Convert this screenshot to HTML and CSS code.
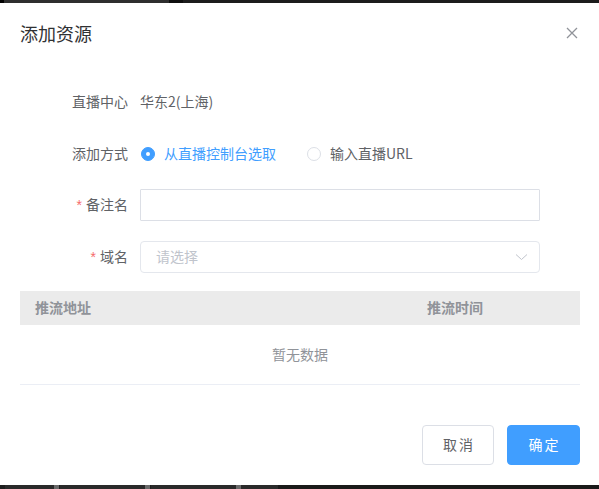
FILE: index.html
```html
<!DOCTYPE html>
<html lang="zh-CN">
<head>
<meta charset="utf-8">
<title>添加资源</title>
<link rel="stylesheet" href="styles.css">
</head>
<body>
<div class="page">
  <div class="topbar">
    <span class="seg s1"></span><span class="seg s2"></span><span class="seg s3"></span><span class="seg s4"></span>
  </div>
  <div class="dialog">
    <div class="header">
      <span class="title">添加资源</span>
      <span class="close">
        <svg width="12" height="12" viewBox="0 0 12 12"><path d="M1 1L11 11M11 1L1 11" stroke="#909399" stroke-width="1.3" fill="none"/></svg>
      </span>
    </div>
    <div class="body">
      <div class="row r1">
        <label class="label">直播中心</label>
        <div class="content"><span class="value">华东2(上海)</span></div>
      </div>
      <div class="row r2">
        <label class="label">添加方式</label>
        <div class="content radios">
          <span class="radio checked"><span class="dot"></span><span class="rtext">从直播控制台选取</span></span>
          <span class="radio"><span class="dot"></span><span class="rtext">输入直播URL</span></span>
        </div>
      </div>
      <div class="row r3">
        <label class="label"><span class="req">*</span>备注名</label>
        <div class="content"><div class="input"></div></div>
      </div>
      <div class="row r4">
        <label class="label"><span class="req">*</span>域名</label>
        <div class="content">
          <div class="select">
            <span class="placeholder">请选择</span>
            <svg class="arrow" width="13" height="8" viewBox="0 0 13 8"><path d="M1 1.5L6.5 6.5L12 1.5" stroke="#C0C4CC" stroke-width="1" fill="none"/></svg>
          </div>
        </div>
      </div>
      <div class="table">
        <div class="thead">
          <div class="th">推流地址</div>
          <div class="th">推流时间</div>
        </div>
        <div class="empty">暂无数据</div>
      </div>
    </div>
    <div class="footer">
      <button class="btn cancel">取消</button>
      <button class="btn primary">确定</button>
    </div>
  </div>
  <div class="bottombar">
    <span class="b b1"></span><span class="b b2"></span><span class="b g"></span><span class="b b3"></span><span class="b b2"></span><span class="b g"></span><span class="b b3"></span><span class="b b2"></span><span class="b g"></span><span class="b b4"></span><span class="b rest"></span>
  </div>
</div>
</body>
</html>
```

FILE: styles.css
```css
* { box-sizing: border-box; }
html, body { margin: 0; padding: 0; }
body {
  width: 599px;
  height: 489px;
  overflow: hidden;
  background: #1b1b1b;
  font-family: "Noto Sans CJK SC", "Liberation Sans", sans-serif;
  font-size: 14px;
  color: #606266;
}
.page {
  display: flex;
  flex-direction: column;
  height: 489px;
}
.topbar {
  height: 3px;
  display: flex;
  flex: none;
  background: #1c1c1c;
}
.seg { display: block; height: 3px; }
.s1 { width: 4px; background: #000; }
.s2 { width: 165px; background: #2e2e2e; }
.s3 { width: 14px; background: #0e0e0e; }
.s4 { flex: 1; background: #1c1c1c; }

.dialog {
  flex: 1;
  background: #fff;
  display: flex;
  flex-direction: column;
}
.header {
  display: flex;
  justify-content: space-between;
  align-items: center;
  padding: 18px 21px 12px 20px;
}
.title {
  font-size: 18px;
  line-height: 24px;
  color: #303133;
}
.close { display: flex; width: 12px; height: 12px; margin-top: 0; }

.body {
  padding: 29px 19px 30px 20px;
}
.row {
  display: flex;
  align-items: center;
  height: 32px;
}
.r1 { margin-bottom: 20px; }
.r2 { margin-bottom: 19px; }
.r3 { margin-bottom: 20px; }
.r4 { margin-bottom: 18px; }
.label {
  width: 120px;
  padding-right: 12px;
  text-align: right;
  color: #606266;
  line-height: 32px;
  margin-top: -2px;
}
.req {
  color: #F56C6C;
  margin-right: 4px;
  font-family: "Liberation Sans", sans-serif;
}
.content {
  width: 400px;
  display: flex;
  align-items: center;
}
.value { color: #606266; margin-top: -2px; }
.radio {
  display: inline-flex;
  align-items: center;
  margin-right: 30px;
  color: #606266;
}
.rtext { margin-top: -2px; }
.radio .dot {
  width: 14px;
  height: 14px;
  border-radius: 50%;
  border: 1px solid #DCDFE6;
  background: #fff;
  margin-left: 1px;
  margin-right: 9px;
  position: relative;
}
.radio.checked .dot {
  border-color: #409EFF;
  background: #409EFF;
}
.radio.checked .dot::after {
  content: "";
  position: absolute;
  left: 4px;
  top: 4px;
  width: 4px;
  height: 4px;
  border-radius: 50%;
  background: #fff;
}
.radio.checked .rtext { color: #409EFF; }
.input {
  width: 400px;
  height: 32px;
  border: 1px solid #DCDFE6;
  border-radius: 1px;
}
.select {
  width: 400px;
  height: 32px;
  border: 1px solid #E4E7ED;
  border-radius: 4px;
  display: flex;
  align-items: center;
  justify-content: space-between;
  padding: 0 11px 0 15px;
}
.placeholder { color: #C0C4CC; margin-top: -2px; }
.arrow { display: block; }

.table {
  width: 560px;
  border-bottom: 1px solid #EBEEF5;
}
.thead {
  display: grid;
  grid-template-columns: 392px 1fr;
  height: 34px;
  background: #EBEBEB;
  align-items: center;
}
.th {
  padding-left: 15px;
  font-weight: bold;
  color: #909399;
  margin-top: -2px;
}
.empty {
  height: 59px;
  display: flex;
  align-items: center;
  justify-content: center;
  color: #909399;
  padding-bottom: 2px;
}

.footer {
  display: flex;
  justify-content: flex-end;
  gap: 13px;
  padding: 10px 19px 20px 20px;
}
.btn {
  height: 40px;
  border-radius: 4px;
  font-family: "Noto Sans CJK SC", sans-serif;
  font-size: 14px;
  letter-spacing: 2px;
  padding: 0 0 2px 2px;
  cursor: pointer;
}
.cancel {
  width: 72px;
  background: #fff;
  border: 1px solid #DCDFE6;
  color: #606266;
}
.primary {
  width: 73px;
  background: #409EFF;
  border: 1px solid #409EFF;
  color: #fff;
}

.bottombar {
  height: 4px;
  flex: none;
  display: flex;
  background: #1a1a1a;
}
.b { display: block; height: 4px; }
.b1 { width: 5px; background: #1e1e1e; }
.b2 { width: 49px; background: #2a2a2a; }
.b3 { width: 37px; background: #2a2a2a; border-left: 1px solid #1e1e1e; }
.b4 { width: 37px; background: #2a2a2a; }
.g { width: 5px; background: #6a6a6a; }
.rest { flex: 1; background: #1a1a1a; }
```
